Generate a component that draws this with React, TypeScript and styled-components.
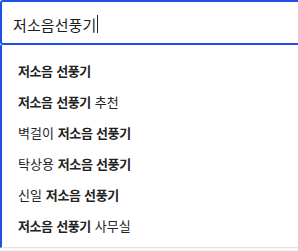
import React from "react";
import styled, { createGlobalStyle } from "styled-components";

const Global = createGlobalStyle`
  html, body { margin: 0; padding: 0; background: #ffffff; overflow: hidden; }
  body { font-family: "Noto Sans CJK KR", "Noto Sans", sans-serif; }
`;

const Wrap = styled.div`
  width: 310px;
  display: flex;
  flex-direction: column;
`;

const SearchBox = styled.div`
  height: 45px;
  box-sizing: border-box;
  border: 2px solid #1e4fe6;
  border-radius: 3px 0 0 3px;
  display: flex;
  align-items: center;
  padding: 3px 0 0 11px;
  background: #fff;
`;

const Query = styled.span`
  font-size: 15px;
  color: #1d1d1d;
  letter-spacing: 0.1px;
`;

const Caret = styled.span`
  display: inline-block;
  width: 1px;
  height: 18px;
  background: #222;
  margin-left: 1px;
`;

const List = styled.ul`
  list-style: none;
  margin: 0;
  padding: 10px 0 6px;
  border-left: 2px solid #1e4fe6;
  border-bottom: 1px solid #e3e3e3;
  background: #fff;
`;

const Item = styled.li`
  height: 31px;
  display: flex;
  align-items: center;
  padding-left: 16px;
  font-size: 13px;
  color: #222;
  white-space: pre;
  word-spacing: 1px;
`;

const Strong = styled.b`
  font-weight: 700;
  letter-spacing: -0.4px;
`;

const Rest = styled.div`
  height: 20px;
  background: #f7f7f7;
`;

type Part = { t: string; b?: boolean };
const items: Part[][] = [
  [{ t: "저소음 선풍기", b: true }],
  [{ t: "저소음 선풍기", b: true }, { t: " 추천" }],
  [{ t: "벽걸이 " }, { t: "저소음 선풍기", b: true }],
  [{ t: "탁상용 " }, { t: "저소음 선풍기", b: true }],
  [{ t: "신일 " }, { t: "저소음 선풍기", b: true }],
  [{ t: "저소음 선풍기", b: true }, { t: " 사무실" }],
];

export default function App() {
  return (
    <Wrap>
      <Global />
      <SearchBox>
        <Query>저소음선풍기</Query>
        <Caret />
      </SearchBox>
      <List>
        {items.map((parts, i) => (
          <Item key={i}>
            {parts.map((p, j) =>
              p.b ? <Strong key={j}>{p.t}</Strong> : <span key={j}>{p.t}</span>
            )}
          </Item>
        ))}
      </List>
      <Rest />
    </Wrap>
  );
}
